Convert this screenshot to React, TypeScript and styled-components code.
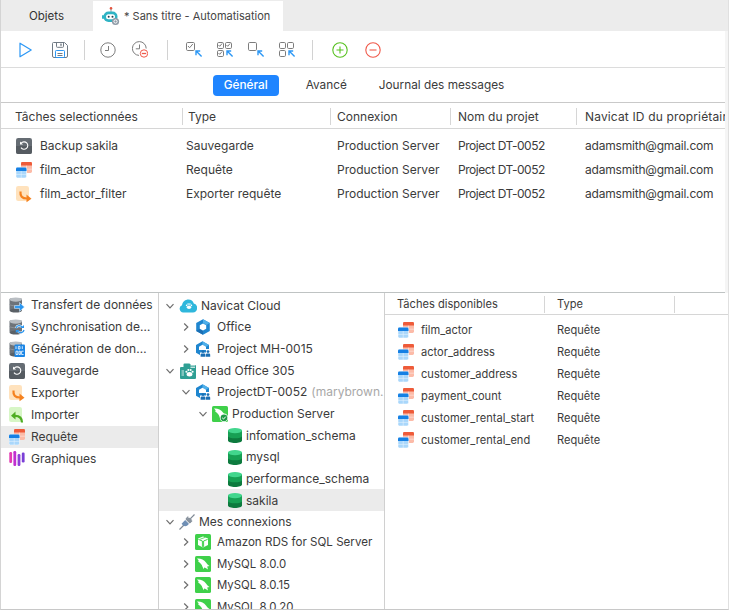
import React from "react";
import styled, { createGlobalStyle } from "styled-components";

const Global = createGlobalStyle`
  html, body { margin: 0; padding: 0; background: #fff; }
  * { box-sizing: border-box; }
`;

const Window = styled.div`
  width: 729px; height: 610px; overflow: hidden; display: flex; flex-direction: column;
  background: #fff; color: #3b3b3b;
  font: 12px/16px Inter, "Noto Sans", sans-serif;
  border-left: 1px solid #d4d4d4; border-right: 1px solid #e0e0e0; border-bottom: 1px solid #c8c8c8;
`;
const TabBar = styled.div`
  height: 31px; flex: none; display: flex; background: #ececec; padding-top: 1px;
`;
const PlainTab = styled.div`
  width: 92px; display: flex; align-items: center; justify-content: center; padding-right: 1px; color: #333; font-size: 11.5px;
`;
const ActiveTab = styled.div`
  width: 190px; background: #fff; display: flex; align-items: center; gap: 4px; padding-left: 9px; color: #444;
  white-space: nowrap; font-size: 11px;
`;
const TopArea = styled.div`
  flex: none; border-right: 3px solid #f5f5f5;
`;
const Toolbar = styled.div`
  height: 37px; flex: none; display: flex; align-items: center; padding: 1px 0 0 16px;
  border-bottom: 1px solid #dcdcdc;
`;
const ToolGroup = styled.div<{ $gap: number }>`
  display: flex; align-items: center; gap: ${p => p.$gap}px;
`;
const ToolSep = styled.div<{ $l: number; $r: number }>`
  width: 1px; height: 20px; background: #d2d2d2; margin: 0 ${p => p.$r}px 0 ${p => p.$l}px;
`;
const ModeBar = styled.div`
  height: 35px; flex: none; display: flex; align-items: center; justify-content: center; padding-right: 4px;
  border-bottom: 1px solid #c9c9c9; font-size: 11.8px;
`;
const ModeTab = styled.div<{ $active?: boolean; $pad: number }>`
  height: 21px; display: flex; align-items: center; padding: 0 ${p => p.$pad}px; border-radius: 4px;
  background: ${p => (p.$active ? "#1f85ff" : "transparent")};
  color: ${p => (p.$active ? "#fff" : "#3b3b3b")};
  font-weight: ${p => (p.$active ? 500 : 400)};
`;
const TopPanel = styled.div`
  height: 190px; flex: none; overflow: hidden; border-bottom: 1px solid #bfc3c3;
`;
const topCols = "181px 148px 120px 126px 1fr";
const TableHead = styled.div<{ $cols: string; $h: number; $pt: number }>`
  height: ${p => p.$h}px; display: grid; grid-template-columns: ${p => p.$cols}; align-items: center; padding-top: ${p => p.$pt}px;
  border-bottom: 1px solid #d6d6d6; white-space: nowrap; overflow: hidden;
`;
const HeadCell = styled.div<{ $pad: number; $sep?: boolean; $ls?: number }>`
  height: 17px; line-height: 17px; padding-left: ${p => p.$pad}px; overflow: hidden; letter-spacing: ${p => p.$ls ?? 0}px;
  border-left: ${p => (p.$sep ? "1px solid #d6d6d6" : "none")};
`;
const TableBody = styled.div<{ $top: number }>`
  padding-top: ${p => p.$top}px;
`;
const TableRow = styled.div<{ $cols: string; $h: number }>`
  height: ${p => p.$h}px; display: grid; grid-template-columns: ${p => p.$cols}; align-items: center; white-space: nowrap;
`;
const NameCell = styled.div<{ $pad: number; $gap: number }>`
  display: flex; align-items: center; gap: ${p => p.$gap}px; padding-left: ${p => p.$pad}px;
`;
const Cell = styled.div<{ $pad: number; $ls?: number }>`
  padding-left: ${p => p.$pad}px; overflow: hidden; letter-spacing: ${p => p.$ls ?? 0}px;
`;
const Bottom = styled.div`
  flex: 1; min-height: 0; display: grid; grid-template-columns: 158px 226px 1fr;
`;
const Categories = styled.div`
  border-right: 1px solid #d0d0d0; padding-top: 1px; overflow: hidden;
`;
const CategoryRow = styled.div<{ $active?: boolean }>`
  height: 22px; display: flex; align-items: center; gap: 6px; padding-left: 8px; white-space: nowrap;
  background: ${p => (p.$active ? "#ebebeb" : "transparent")};
`;
const Tree = styled.div`
  border-right: 1px solid #d0d0d0; overflow: hidden; padding-top: 1px;
`;
const TreeRow = styled.div<{ $indent: number; $active?: boolean; $size?: number; $lift?: boolean }>`
  height: 21.67px; display: flex; align-items: center; gap: 4px; white-space: nowrap;
  padding: ${p => (p.$lift ? "0 0 2px" : "2px 0 0")} ${p => p.$indent}px;
  font-size: ${p => p.$size ?? 12}px;
  background: ${p => (p.$active ? "#ebebeb" : "transparent")};
`;
const ChevronSlot = styled.div`
  width: 10px; height: 10px; flex: none; display: flex; align-items: center; justify-content: center;
`;
const IconSlot = styled.div`
  width: 18px; flex: none;
`;
const Muted = styled.span`
  color: #a8a8a8; margin-left: 4px;
`;
const Available = styled.div`
  overflow: hidden; font-size: 11.1px;
`;

const Svg = styled.svg`
  display: block; flex: none;
`;

const Robot = () => (
  <Svg width="18" height="20" viewBox="0 0 18 20">
    <circle cx="9" cy="2.4" r="1.3" fill="#e5533d" />
    <rect x="8.5" y="3" width="1" height="3" fill="#999" />
    <rect x="1.5" y="5.5" width="14" height="10.5" rx="5" fill="#2fb3c4" />
    <rect x="0" y="9" width="2" height="4" rx="1" fill="#2fb3c4" />
    <rect x="4" y="8.3" width="9" height="5" rx="2.5" fill="#fff" />
    <circle cx="6.7" cy="10.8" r="1" fill="#24414f" />
    <circle cx="10.5" cy="10.8" r="1" fill="#24414f" />
    <circle cx="13.5" cy="15.5" r="3.6" fill="#8e9aa6" />
    <circle cx="13.5" cy="15.5" r="1.6" fill="none" stroke="#fff" strokeWidth="1" />
  </Svg>
);
const PlayI = () => (
  <Svg width="16" height="16" viewBox="0 0 16 16">
    <path d="M3 1.2 L14.2 8 L3 14.8 Z" fill="none" stroke="#2b97f5" strokeWidth="1.2" strokeLinejoin="round" />
  </Svg>
);
const SaveI = () => (
  <Svg width="16" height="16" viewBox="0 0 16 16" fill="none" stroke="#707a84" strokeWidth="1">
    <path d="M1.5.5H12.5L15.5 3.5V14A1.5 1.5 0 0 1 14 15.5H2A1.5 1.5 0 0 1 .5 14V1.5A1 1 0 0 1 1.5.5Z" />
    <path d="M4.5.5V4.5A.8.8 0 0 0 5.3 5.3H10.7A.8.8 0 0 0 11.5 4.5V.5" />
    <rect x="8.3" y="1.6" width="1.4" height="2.2" fill="#707a84" stroke="none" />
    <rect x="3.5" y="8.5" width="9" height="7" rx=".8" stroke="#2b97f5" />
    <path d="M5.5 11.5H10.5M5.5 13.5H10.5" stroke="#707a84" />
  </Svg>
);
const ClockI = () => (
  <Svg width="16" height="16" viewBox="0 0 16 16" fill="none" stroke="#7d7d7d" strokeWidth="1">
    <circle cx="8" cy="8" r="7.2" />
    <path d="M8.5 4V8.5H5" />
  </Svg>
);
const ClockMinusI = () => (
  <Svg width="16" height="17" viewBox="0 0 16 17" fill="none" strokeWidth="1">
    <path d="M7 14.4A6.9 6.9 0 1 1 14.2 7.5" stroke="#7d7d7d" />
    <path d="M7.5 3.5V7.8H3.8" stroke="#7d7d7d" />
    <circle cx="12" cy="12.5" r="3.7" fill="#fff" stroke="#f0594a" />
    <path d="M9.8 12.5H14.2" stroke="#f0594a" strokeWidth="1.3" />
  </Svg>
);
const Arrow = ({ x, y }: { x: number; y: number }) => (
  <path d={`M${x + 5.6} ${y + 5.6}L${x + .6} ${y + .6}M${x} ${y + 4.2}V${y}H${x + 4.2}`} fill="none" stroke="#2b97f5" strokeWidth="1.4" />
);
const Box = ({ x, y, s, checked }: { x: number; y: number; s: number; checked?: boolean }) => (
  <g fill="none" stroke="#7d7d7d" strokeWidth="1">
    <rect x={x + .5} y={y + .5} width={s} height={s} rx="1.2" />
    {checked && <path d={`M${x + s * .25} ${y + s * .5}L${x + s * .45} ${y + s * .72}L${x + s * .85} ${y + s * .25}`} />}
  </g>
);
const CheckOneI = () => (
  <Svg width="17" height="16" viewBox="0 0 17 16">
    <Box x={0} y={0} s={8} checked />
    <Arrow x={10} y={9} />
  </Svg>
);
const CheckManyI = () => (
  <Svg width="17" height="16" viewBox="0 0 17 16">
    <Box x={0} y={0} s={6} checked /><Box x={8} y={0} s={6} checked /><Box x={0} y={8} s={6} checked />
    <Arrow x={10} y={9} />
  </Svg>
);
const SquareOneI = () => (
  <Svg width="17" height="16" viewBox="0 0 17 16">
    <Box x={0} y={0} s={8} />
    <Arrow x={10} y={9} />
  </Svg>
);
const SquareManyI = () => (
  <Svg width="17" height="16" viewBox="0 0 17 16">
    <Box x={0} y={0} s={6} /><Box x={8} y={0} s={6} /><Box x={0} y={8} s={6} />
    <Arrow x={10} y={9} />
  </Svg>
);
const PlusI = () => (
  <Svg width="16" height="16" viewBox="0 0 16 16" fill="none" stroke="#56c11f" strokeWidth="1.1">
    <circle cx="8" cy="8" r="7.2" /><path d="M4.5 8H11.5M8 4.5V11.5" />
  </Svg>
);
const MinusI = () => (
  <Svg width="16" height="16" viewBox="0 0 16 16" fill="none" stroke="#f0594a" strokeWidth="1.1">
    <circle cx="8" cy="8" r="7.2" /><path d="M4.5 8H11.5" />
  </Svg>
);
const QueryI = () => (
  <Svg width="16" height="16" viewBox="0 0 16 16">
    <rect x="5" y="0" width="11" height="11" rx="1.4" fill="#fcbba8" />
    <path d="M5 1.4A1.4 1.4 0 0 1 6.4 0H14.6A1.4 1.4 0 0 1 16 1.4V3.6H5Z" fill="#ee5b39" />
    <path d="M10.5 3.6V11M5 7.2H16" stroke="#fff" strokeWidth=".6" opacity=".7" />
    <rect x="0" y="5.5" width="10.5" height="10.5" rx="1.4" fill="#a9d7fb" stroke="#fff" strokeWidth=".5" />
    <path d="M0 6.9A1.4 1.4 0 0 1 1.4 5.5H9.1A1.4 1.4 0 0 1 10.5 6.9V9H0Z" fill="#1580e4" />
    <path d="M5.2 9V16M0 12.4H10.5" stroke="#fff" strokeWidth=".6" opacity=".7" />
  </Svg>
);
const BackupI = () => (
  <Svg width="16" height="16" viewBox="0 0 16 16">
    <rect width="16" height="16" rx="2.2" fill="#656c73" />
    <path d="M0 8H16V13.8A2.2 2.2 0 0 1 13.8 16H2.2A2.2 2.2 0 0 1 0 13.8Z" fill="#555b61" />
    <path d="M5.2 5.2A3.7 3.7 0 1 1 5 9.6" fill="none" stroke="#fff" strokeWidth="1.1" />
    <path d="M4 3.6V6.6H7Z" fill="#fff" />
  </Svg>
);
const ExportI = () => (
  <Svg width="16" height="17" viewBox="0 0 16 17">
    <rect width="13" height="15" rx="2.2" fill="#ffe2bd" />
    <path d="M4.5 5.5C4 10 6 12.5 11 12.5" fill="none" stroke="#f5821f" strokeWidth="2.2" />
    <path d="M10.5 8.6L15.5 12.7L10.5 16.2Z" fill="#f5821f" />
  </Svg>
);
const ImportI = () => (
  <Svg width="16" height="17" viewBox="0 0 16 17">
    <rect width="13" height="15" rx="2.2" fill="#d7f6c6" />
    <path d="M13 15.5C13 11 11 8.8 6 8.8" fill="none" stroke="#4fad23" strokeWidth="2.2" />
    <path d="M6.5 4.6L2 8.8L6.5 12.6Z" fill="#4fad23" />
  </Svg>
);
const ChartI = () => (
  <Svg width="16" height="16" viewBox="0 0 16 16">
    <rect x="0.3" y="1" width="2.8" height="11" rx="1.2" fill="#e33bb3" />
    <rect x="4.4" y="0" width="2.8" height="15" rx="1.2" fill="#c12fd0" />
    <rect x="8.6" y="3" width="2.8" height="12" rx="1.2" fill="#8f3fd8" />
    <rect x="12.8" y="1.5" width="2.8" height="10" rx="1.2" fill="#7a3fd6" />
  </Svg>
);
const GreyDb = () => (
  <>
    <rect x="0.5" y="1.5" width="12.5" height="12" rx="1" fill="#6d7379" />
    <ellipse cx="6.75" cy="2.6" rx="6.25" ry="2.1" fill="#b9bec3" />
    <path d="M.5 7.5C2 9.2 11.5 9.2 13 7.5" fill="none" stroke="#969ba0" strokeWidth=".8" />
    <ellipse cx="6.75" cy="13.6" rx="6.25" ry="2" fill="#5a6066" />
  </>
);
const TransferI = () => (
  <Svg width="16" height="16" viewBox="0 0 16 16">
    <GreyDb />
    <path d="M5.5 8.6H10.5V5.6L15.5 10L10.5 14.4V11.4H5.5Z" fill="#2a96f0" stroke="#fff" strokeWidth=".5" />
  </Svg>
);
const SyncI = () => (
  <Svg width="16" height="16" viewBox="0 0 16 16">
    <GreyDb />
    <path d="M7 9A3.4 3.4 0 0 1 13 8M15 11A3.4 3.4 0 0 1 9 12.4" fill="none" stroke="#fff" strokeWidth="2.2" />
    <path d="M7 9A3.4 3.4 0 0 1 13 8M15 11A3.4 3.4 0 0 1 9 12.4" fill="none" stroke="#2a96f0" strokeWidth="1.3" />
    <path d="M11.5 9H15V6ZM10.5 11H6.8V14Z" fill="#2a96f0" />
  </Svg>
);
const GenI = () => (
  <Svg width="16" height="16" viewBox="0 0 16 16">
    <GreyDb />
    <rect x="5.5" y="3.5" width="10.5" height="12.5" rx="1" fill="#1b86e6" />
    <path d="M7 5.2V8M9.3 5.4H11V8H9.3ZM13.3 5.2V8M7 10.2H8.8V13.5H7ZM10 10.2H11.4V13.5H10ZM12.6 10.2H14.6M12.6 13.5H14.6M12.6 10.2V13.5" fill="none" stroke="#fff" strokeWidth=".8" />
  </Svg>
);
const Chevron = ({ open }: { open?: boolean }) => (
  <ChevronSlot>
    <Svg width="10" height="10" viewBox="0 0 10 10" fill="none" stroke="#6e6e6e" strokeWidth="1.2">
      <path d={open ? "M1.5 3.2L5 6.8L8.5 3.2" : "M3.2 1.5L6.8 5L3.2 8.5"} />
    </Svg>
  </ChevronSlot>
);
const NoChevron = () => <ChevronSlot />;
const Paw = ({ cx, cy, k = 1 }: { cx: number; cy: number; k?: number }) => (
  <g fill="#fff">
    <ellipse cx={cx} cy={cy + 1.3 * k} rx={2.2 * k} ry={1.7 * k} />
    <circle cx={cx - 2.4 * k} cy={cy - .6 * k} r={.8 * k} />
    <circle cx={cx - .9 * k} cy={cy - 1.9 * k} r={.8 * k} />
    <circle cx={cx + .9 * k} cy={cy - 1.9 * k} r={.8 * k} />
    <circle cx={cx + 2.4 * k} cy={cy - .6 * k} r={.8 * k} />
  </g>
);
const CloudI = () => (
  <Svg width="18" height="14" viewBox="0 0 18 14">
    <path d="M4.2 13.5A3.8 3.8 0 0 1 3 6.2C3.6 2.6 6.4.5 9.4.5C12 .5 14 2 14.8 4.5A4.6 4.6 0 0 1 14 13.5Z" fill="#2fb7dc" />
    <Paw cx={10} cy={7} />
  </Svg>
);
const HexI = () => (
  <Svg width="16" height="16" viewBox="0 0 16 16">
    <path d="M8 .3L14.8 4.1V11.9L8 15.7L1.2 11.9V4.1Z" fill="#1f86cf" />
    <path d="M8 .3L14.8 4.1L11.5 6L8 4Z" fill="#4fb0ea" />
    <path d="M1.2 11.9L4.5 10L8 12V15.7Z" fill="#1b6fb3" />
    <path d="M8 4.4L11.2 6.2V9.8L8 11.6L4.8 9.8V6.2Z" fill="#fff" />
  </Svg>
);
const HexTeamI = () => (
  <Svg width="16" height="16" viewBox="0 0 16 16">
    <path d="M7.5.3L14 4V8H11V11.5H5V14L1 11.7V4Z" fill="#1f86cf" />
    <path d="M7.5.3L14 4L11 5.7L7.5 3.8Z" fill="#4fb0ea" />
    <path d="M7.5 3.8L11 5.8V9H4V5.8Z" fill="#fff" />
    <g fill="#1b6fb3">
      <circle cx="8" cy="10.6" r="1.4" /><path d="M5.6 15.8V13.8A1.2 1.2 0 0 1 6.8 12.6H9.2A1.2 1.2 0 0 1 10.4 13.8V15.8Z" />
      <circle cx="13" cy="10.6" r="1.4" /><path d="M10.9 15.8V13.8A1.2 1.2 0 0 1 12.1 12.6H14A1.2 1.2 0 0 1 15.2 13.8V15.8Z" />
    </g>
  </Svg>
);
const HeadOfficeI = () => (
  <Svg width="18" height="16" viewBox="0 0 18 16">
    <path d="M4.5 1.5A1 1 0 0 1 5.5.5H10.5L12 2H16A1 1 0 0 1 17 3V15A1 1 0 0 1 16 16H2A1 1 0 0 1 1 15V5A1 1 0 0 1 2 4H4.5Z" fill="#2f9f94" />
    <path d="M11.5 2.8H16M11.5 4.4H16M2.5 8H5M2.5 10H5M2.5 12H5" stroke="#fff" strokeWidth=".8" />
    <Paw cx={10.5} cy={9.5} k={1.3} />
  </Svg>
);
const Dolphin = () => (
  <path d="M2 2.5C5.5 2.2 9 3.6 11 6.5C12 8 13 9.3 14.5 10L12.2 10.4L13 13.5C11.5 12 10.5 11.8 9.2 11.4L8.8 13.2C7.8 11.6 7.3 10.3 6.8 9C5.8 7.5 4.5 6.2 3.3 5.8L3.6 4.2Z" fill="#fff" />
);
const ProductionI = () => (
  <Svg width="16" height="16" viewBox="0 0 16 16">
    <rect width="16" height="16" rx="1.6" fill="#3fd04a" />
    <Dolphin />
    <circle cx="12" cy="11.8" r="4.2" fill="#fff" />
    <circle cx="12" cy="11.8" r="3.4" fill="#1e9a45" />
    <path d="M10.2 11.8L11.5 13.1L13.8 10.6" fill="none" stroke="#fff" strokeWidth="1" />
  </Svg>
);
const DbI = () => (
  <Svg width="14" height="15" viewBox="0 0 14 15">
    <path d="M0 2.5H14V12.5C14 14 10.8 15 7 15S0 14 0 12.5Z" fill="#0d7a3e" />
    <path d="M0 2.5H14V8C14 9.4 10.8 10.3 7 10.3S0 9.4 0 8Z" fill="#17a054" />
    <ellipse cx="7" cy="2.6" rx="7" ry="2.6" fill="#42d68d" />
  </Svg>
);
const PlugI = () => (
  <Svg width="16" height="16" viewBox="0 0 16 16">
    <path d="M0.5 15.5L5 11M11.2 4.8L15.5 .5" stroke="#7e8894" strokeWidth="1.2" />
    <path d="M2.6 9.7L6.2 6.1L9.9 9.8C8.8 12.2 6 13 4.1 11.6Z" fill="#6f8fb5" />
    <path d="M6.6 5.5C8 3.7 10.5 3.2 12 4.4C13.3 5.6 12.8 8 10.6 9.4Z" fill="#8a949f" />
    <path d="M7 5L9.3 2.7M10.8 8.9L13.1 6.6" stroke="#8a949f" strokeWidth="1.2" />
  </Svg>
);
const AmazonI = () => (
  <Svg width="16" height="16" viewBox="0 0 16 16">
    <rect width="16" height="16" rx="1.6" fill="#3fd04a" />
    <path d="M8 2.6L13 4.6V11L8 13.4L3 11V4.6Z" fill="#fff" />
    <path d="M3.4 5.4L7.4 7V12.6L8.6 12.6V7L12.6 5.4" fill="none" stroke="#3fd04a" strokeWidth="1" />
    <path d="M5.2 5.2L10.4 3.3" stroke="#3fd04a" strokeWidth=".8" />
  </Svg>
);
const MysqlI = () => (
  <Svg width="16" height="16" viewBox="0 0 16 16">
    <rect width="16" height="16" rx="1.6" fill="#3fd04a" />
    <Dolphin />
  </Svg>
);

const rows = [
  { icon: <BackupI />, name: "Backup sakila", type: "Sauvegarde" },
  { icon: <QueryI />, name: "film_actor", type: "Requête" },
  { icon: <ExportI />, name: "film_actor_filter", type: "Exporter requête" },
];
const categories = [
  { icon: <TransferI />, label: "Transfert de données" },
  { icon: <SyncI />, label: "Synchronisation de…" },
  { icon: <GenI />, label: "Génération de don…" },
  { icon: <BackupI />, label: "Sauvegarde" },
  { icon: <ExportI />, label: "Exporter" },
  { icon: <ImportI />, label: "Importer" },
  { icon: <QueryI />, label: "Requête", active: true },
  { icon: <ChartI />, label: "Graphiques" },
];
const tasks = ["film_actor", "actor_address", "customer_address", "payment_count", "customer_rental_start", "customer_rental_end"];
const botCols = "159px 130px 54px";

export default function App() {
  return (
    <Window>
      <Global />
      <TabBar>
        <PlainTab>Objets</PlainTab>
        <ActiveTab><Robot />* Sans titre - Automatisation</ActiveTab>
      </TabBar>
      <TopArea>
        <Toolbar>
          <ToolGroup $gap={19}><PlayI /><SaveI /></ToolGroup>
          <ToolSep $l={16} $r={15} />
          <ToolGroup $gap={16}><ClockI /><ClockMinusI /></ToolGroup>
          <ToolSep $l={19} $r={18} />
          <ToolGroup $gap={14}><CheckOneI /><CheckManyI /><SquareOneI /><SquareManyI /></ToolGroup>
          <ToolSep $l={16} $r={19} />
          <ToolGroup $gap={17}><PlusI /><MinusI /></ToolGroup>
        </Toolbar>
        <ModeBar>
          <ModeTab $active $pad={11}>Général</ModeTab>
          <ModeTab $pad={27}>Avancé</ModeTab>
          <ModeTab $pad={5}>Journal des messages</ModeTab>
        </ModeBar>
        <TopPanel>
          <TableHead $cols={topCols} $h={26} $pt={1}>
            <HeadCell $pad={14}>Tâches selectionnées</HeadCell>
            <HeadCell $pad={5} $sep>Type</HeadCell>
            <HeadCell $pad={6} $sep>Connexion</HeadCell>
            <HeadCell $pad={7} $sep>Nom du projet</HeadCell>
            <HeadCell $pad={8} $sep $ls={0.15}>Navicat ID du propriétaire</HeadCell>
          </TableHead>
          <TableBody $top={5}>
            {rows.map(r => (
              <TableRow key={r.name} $cols={topCols} $h={24}>
                <NameCell $pad={15} $gap={8}>{r.icon}{r.name}</NameCell>
                <Cell $pad={4}>{r.type}</Cell>
                <Cell $pad={7}>Production Server</Cell>
                <Cell $pad={8} $ls={-0.45}>Project DT-0052</Cell>
                <Cell $pad={9} $ls={-0.2}>adamsmith@gmail.com</Cell>
              </TableRow>
            ))}
          </TableBody>
        </TopPanel>
      </TopArea>
      <Bottom>
        <Categories>
          {categories.map(c => (
            <CategoryRow key={c.label} $active={c.active}>{c.icon}{c.label}</CategoryRow>
          ))}
        </Categories>
        <Tree>
          <TreeRow $indent={6}><Chevron open /><CloudI />Navicat Cloud</TreeRow>
          <TreeRow $indent={22}><Chevron /><IconSlot><HexI /></IconSlot>Office</TreeRow>
          <TreeRow $indent={22}><Chevron /><IconSlot><HexTeamI /></IconSlot>Project MH-0015</TreeRow>
          <TreeRow $indent={6}><Chevron open /><HeadOfficeI />Head Office 305</TreeRow>
          <TreeRow $indent={22}><Chevron open /><IconSlot><HexTeamI /></IconSlot><span>ProjectDT-0052<Muted>(marybrown…</Muted></span></TreeRow>
          <TreeRow $indent={39}><Chevron open /><ProductionI />Production Server</TreeRow>
          <TreeRow $indent={55}><NoChevron /><DbI />infomation_schema</TreeRow>
          <TreeRow $indent={55}><NoChevron /><DbI />mysql</TreeRow>
          <TreeRow $indent={55}><NoChevron /><DbI />performance_schema</TreeRow>
          <TreeRow $indent={55} $active><NoChevron /><DbI />sakila</TreeRow>
          <TreeRow $indent={6}><Chevron open /><PlugI />Mes connexions</TreeRow>
          <TreeRow $indent={22} $size={11.6} $lift><Chevron /><IconSlot><AmazonI /></IconSlot>Amazon RDS for SQL Server</TreeRow>
          <TreeRow $indent={22} $size={11.4} $lift><Chevron /><IconSlot><MysqlI /></IconSlot>MySQL 8.0.0</TreeRow>
          <TreeRow $indent={22} $size={11.4} $lift><Chevron /><IconSlot><MysqlI /></IconSlot>MySQL 8.0.15</TreeRow>
          <TreeRow $indent={22} $size={11.4} $lift><Chevron /><IconSlot><MysqlI /></IconSlot>MySQL 8.0.20</TreeRow>
        </Tree>
        <Available>
          <TableHead $cols={botCols} $h={22} $pt={2}>
            <HeadCell $pad={12}>Tâches disponibles</HeadCell>
            <HeadCell $pad={12} $sep>Type</HeadCell>
            <HeadCell $pad={0} $sep />
          </TableHead>
          <TableBody $top={4}>
            {tasks.map(t => (
              <TableRow key={t} $cols={botCols} $h={22}>
                <NameCell $pad={13} $gap={7}><QueryI />{t}</NameCell>
                <Cell $pad={13}>Requête</Cell>
                <span />
              </TableRow>
            ))}
          </TableBody>
        </Available>
      </Bottom>
    </Window>
  );
}
